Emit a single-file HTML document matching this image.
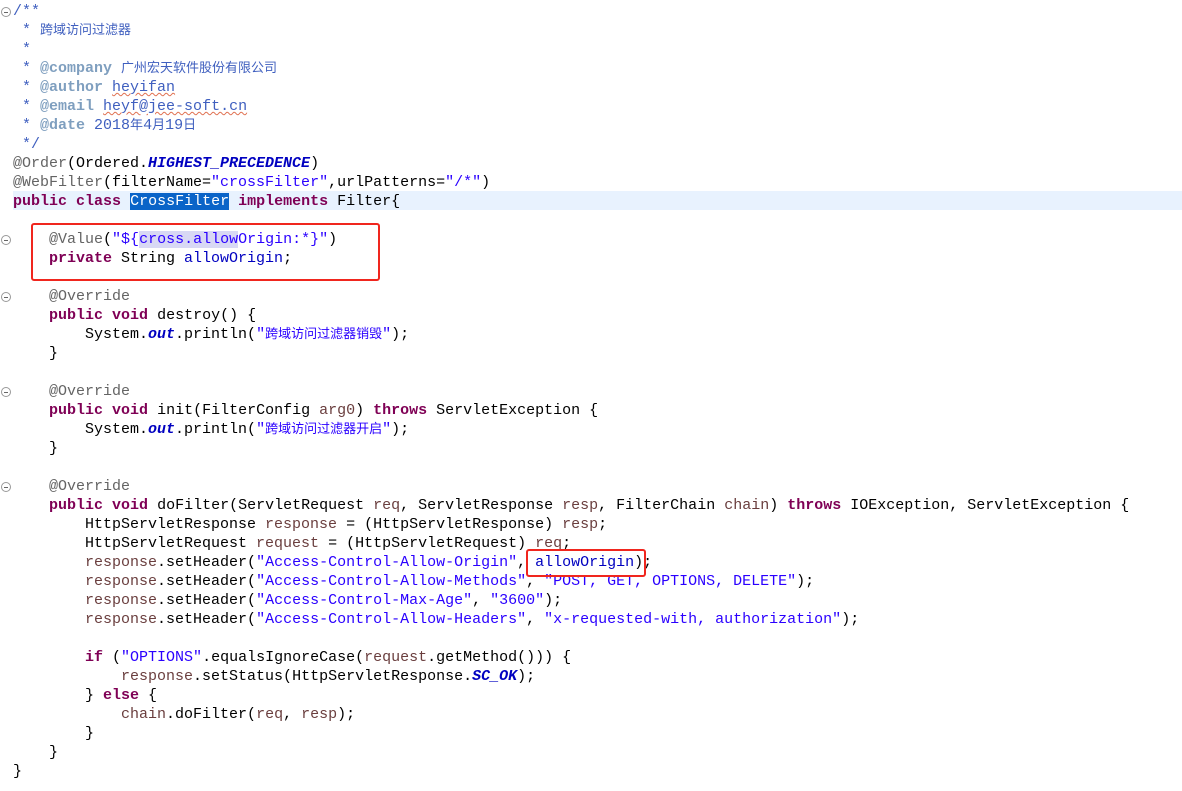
<!DOCTYPE html>
<html><head><meta charset="utf-8"><style>
body{margin:0;background:#fff;width:1182px;height:791px;overflow:hidden;position:relative}
.code{position:absolute;left:13px;top:2px;font-family:"Liberation Mono","Noto Sans CJK SC",monospace;font-size:15px;line-height:19px;white-space:pre;color:#000}
.l{height:19px}
.k{color:#7f0055;font-weight:bold}
.s{color:#2a00ff}
.c{color:#3f5fbf}
.t{color:#7f9fbf;font-weight:bold}
.a{color:#646464}
.f{color:#0000c0}
.sf{color:#0000c0;font-weight:bold;font-style:italic}
.v{color:#6a3e3e}
.cj{font-size:13px}
.u{text-decoration:underline wavy #e07050;text-decoration-thickness:1px}
.hl{position:absolute;left:13px;top:191px;width:1169px;height:19px;background:#e8f2fe}
.sel{background:#0a64c8;color:#fff}
.box{position:absolute;border:2px solid #f0261e;border-radius:3px}
.fold{position:absolute;left:1px;width:8px;height:8px;border:1px solid #999;border-radius:50%;font-size:0}
.fold:after{content:"";position:absolute;left:2px;top:3.5px;width:4px;height:1px;background:#666}
</style></head><body>
<div class="hl"></div>
<div class="fold" style="top:7px"></div>
<div class="fold" style="top:235px"></div>
<div class="fold" style="top:292px"></div>
<div class="fold" style="top:387px"></div>
<div class="fold" style="top:482px"></div>
<div class="code"><div class="l"><span class="c">/**</span></div><div class="l"><span class="c"> * <span class="cj">跨域访问过滤器</span></span></div><div class="l"><span class="c"> *</span></div><div class="l"><span class="c"> * <span class="t">@company</span> <span class="cj">广州宏天软件股份有限公司</span></span></div><div class="l"><span class="c"> * <span class="t">@author</span> <span class="u">heyifan</span></span></div><div class="l"><span class="c"> * <span class="t">@email</span> <span class="u">heyf@jee-soft.cn</span></span></div><div class="l"><span class="c"> * <span class="t">@date</span> 2018<span class="cj">年</span>4<span class="cj">月</span>19<span class="cj">日</span></span></div><div class="l"><span class="c"> */</span></div><div class="l"><span class="a">@Order</span>(Ordered.<span class="sf">HIGHEST_PRECEDENCE</span>)</div><div class="l"><span class="a">@WebFilter</span>(filterName=<span class="s">"crossFilter"</span>,urlPatterns=<span class="s">"/*"</span>)</div><div class="l"><span class="k">public</span> <span class="k">class</span> <span class="sel">CrossFilter</span> <span class="k">implements</span> Filter{</div><div class="l"> </div><div class="l">    <span class="a">@Value</span>(<span class="s">"${<span style="background:#d8d8f4">cross.allow</span>Origin:*}"</span>)</div><div class="l">    <span class="k">private</span> String <span class="f">allowOrigin</span>;</div><div class="l"> </div><div class="l">    <span class="a">@Override</span></div><div class="l">    <span class="k">public</span> <span class="k">void</span> destroy() {</div><div class="l">        System.<span class="sf">out</span>.println(<span class="s">"<span class="cj">跨域访问过滤器销毁</span>"</span>);</div><div class="l">    }</div><div class="l"> </div><div class="l">    <span class="a">@Override</span></div><div class="l">    <span class="k">public</span> <span class="k">void</span> init(FilterConfig <span class="v">arg0</span>) <span class="k">throws</span> ServletException {</div><div class="l">        System.<span class="sf">out</span>.println(<span class="s">"<span class="cj">跨域访问过滤器开启</span>"</span>);</div><div class="l">    }</div><div class="l"> </div><div class="l">    <span class="a">@Override</span></div><div class="l">    <span class="k">public</span> <span class="k">void</span> doFilter(ServletRequest <span class="v">req</span>, ServletResponse <span class="v">resp</span>, FilterChain <span class="v">chain</span>) <span class="k">throws</span> IOException, ServletException {</div><div class="l">        HttpServletResponse <span class="v">response</span> = (HttpServletResponse) <span class="v">resp</span>;</div><div class="l">        HttpServletRequest <span class="v">request</span> = (HttpServletRequest) <span class="v">req</span>;</div><div class="l">        <span class="v">response</span>.setHeader(<span class="s">"Access-Control-Allow-Origin"</span>, <span class="f">allowOrigin</span>);</div><div class="l">        <span class="v">response</span>.setHeader(<span class="s">"Access-Control-Allow-Methods"</span>, <span class="s">"POST, GET, OPTIONS, DELETE"</span>);</div><div class="l">        <span class="v">response</span>.setHeader(<span class="s">"Access-Control-Max-Age"</span>, <span class="s">"3600"</span>);</div><div class="l">        <span class="v">response</span>.setHeader(<span class="s">"Access-Control-Allow-Headers"</span>, <span class="s">"x-requested-with, authorization"</span>);</div><div class="l"> </div><div class="l">        <span class="k">if</span> (<span class="s">"OPTIONS"</span>.equalsIgnoreCase(<span class="v">request</span>.getMethod())) {</div><div class="l">            <span class="v">response</span>.setStatus(HttpServletResponse.<span class="sf">SC_OK</span>);</div><div class="l">        } <span class="k">else</span> {</div><div class="l">            <span class="v">chain</span>.doFilter(<span class="v">req</span>, <span class="v">resp</span>);</div><div class="l">        }</div><div class="l">    }</div><div class="l">}</div></div>
<div class="box" style="left:31px;top:223px;width:345px;height:54px"></div>
<div class="box" style="left:526px;top:549px;width:116px;height:24px"></div>
</body></html>
